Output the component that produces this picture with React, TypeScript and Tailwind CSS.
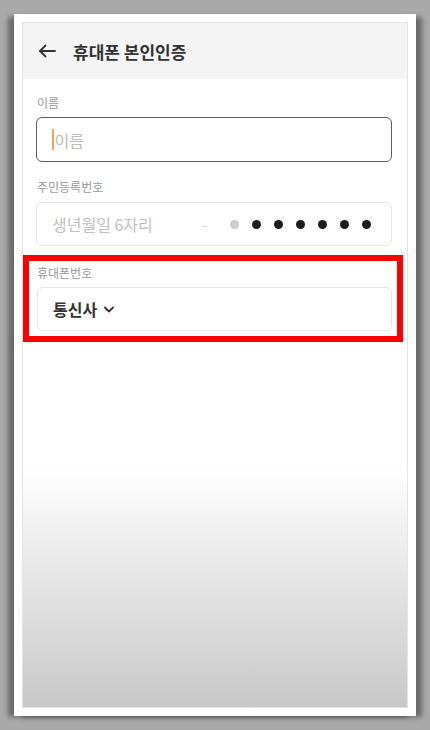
import React from "react";

export default function App() {
  const dark = [0, 1, 2, 3, 4, 5];
  return (
    <div className="w-[430px] h-[730px] bg-[#a9a9a9] p-[14px] font-['Noto_Sans_CJK_KR','Noto_Sans',sans-serif]">
      <div className="h-full bg-white p-[8px] shadow-[-7px_2px_5px_-1px_rgba(0,0,0,0.38),7px_2px_5px_-1px_rgba(0,0,0,0.38)]">
        <div className="h-full flex flex-col border border-[#e4e4e4] bg-[linear-gradient(to_bottom,#ffffff_65%,#c8c8c8_100%)]">
          {/* Header */}
          <div className="h-[56px] bg-[#f4f4f4] flex items-center pl-[15px] shrink-0">
            <svg width="18" height="14" viewBox="0 0 18 14" fill="none" stroke="#333" strokeWidth="1.8" strokeLinecap="round" strokeLinejoin="round">
              <path d="M17 7H2" />
              <path d="M7.5 1.5L2 7l5.5 5.5" />
            </svg>
            <span className="ml-[17px] text-[17px] font-bold text-[#333] leading-none whitespace-nowrap">휴대폰 본인인증</span>
          </div>

          {/* Body */}
          <div className="pl-[13px] pr-[15px] flex flex-col">
            <div className="mt-[16px] pl-[1px] text-[12px] leading-[16px] text-[#9a9a9a]">이름</div>
            <div className="mt-[6px] h-[45px] border-[1.5px] border-[#5f5f5f] rounded-[6px] flex items-center pl-[15px]">
              <span className="w-[1.5px] h-[21px] bg-[#f0a45a] shrink-0" />
              <span className="ml-[1px] text-[16px] text-[#bdbdbd] leading-none whitespace-nowrap">이름</span>
            </div>

            <div className="mt-[17px] pl-[1px] text-[12px] leading-[16px] text-[#9a9a9a]">주민등록번호</div>
            <div className="mt-[7px] h-[44px] border border-[#e6e6e6] rounded-[6px] flex items-center pl-[15px] pr-[20px]">
              <span className="shrink-0 whitespace-nowrap text-[16px] text-[#c0c0c0] leading-none">생년월일 6자리</span>
              <div className="flex-1" />
              <span className="shrink-0 text-[13px] text-[#cfcfcf] leading-none">-</span>
              <span className="shrink-0 ml-[23px] w-[9px] h-[9px] rounded-full bg-[#cccccc]" />
              {dark.map((i) => (
                <span key={i} className="shrink-0 ml-[13px] w-[9px] h-[9px] rounded-full bg-[#1e1e1e]" />
              ))}
            </div>

            <div className="mt-[9px] -ml-[13px] -mr-[11px] border-[6px] border-[#ff0000] pl-[8px] pr-[5px] pt-[4px] pb-[5px]">
              <div className="text-[12px] leading-[16px] text-[#9a9a9a]">휴대폰번호</div>
              <div className="mt-[6px] h-[44px] border border-[#e6e6e6] rounded-[6px] flex items-center pl-[15px]">
                <span className="shrink-0 whitespace-nowrap text-[16px] font-bold text-[#333] leading-none">통신사</span>
                <svg className="ml-[7px] shrink-0" width="10" height="7" viewBox="0 0 10 7" fill="none" stroke="#333" strokeWidth="1.8" strokeLinecap="round" strokeLinejoin="round">
                  <path d="M1 1.5l4 4 4-4" />
                </svg>
              </div>
            </div>
          </div>
        </div>
      </div>
    </div>
  );
}
